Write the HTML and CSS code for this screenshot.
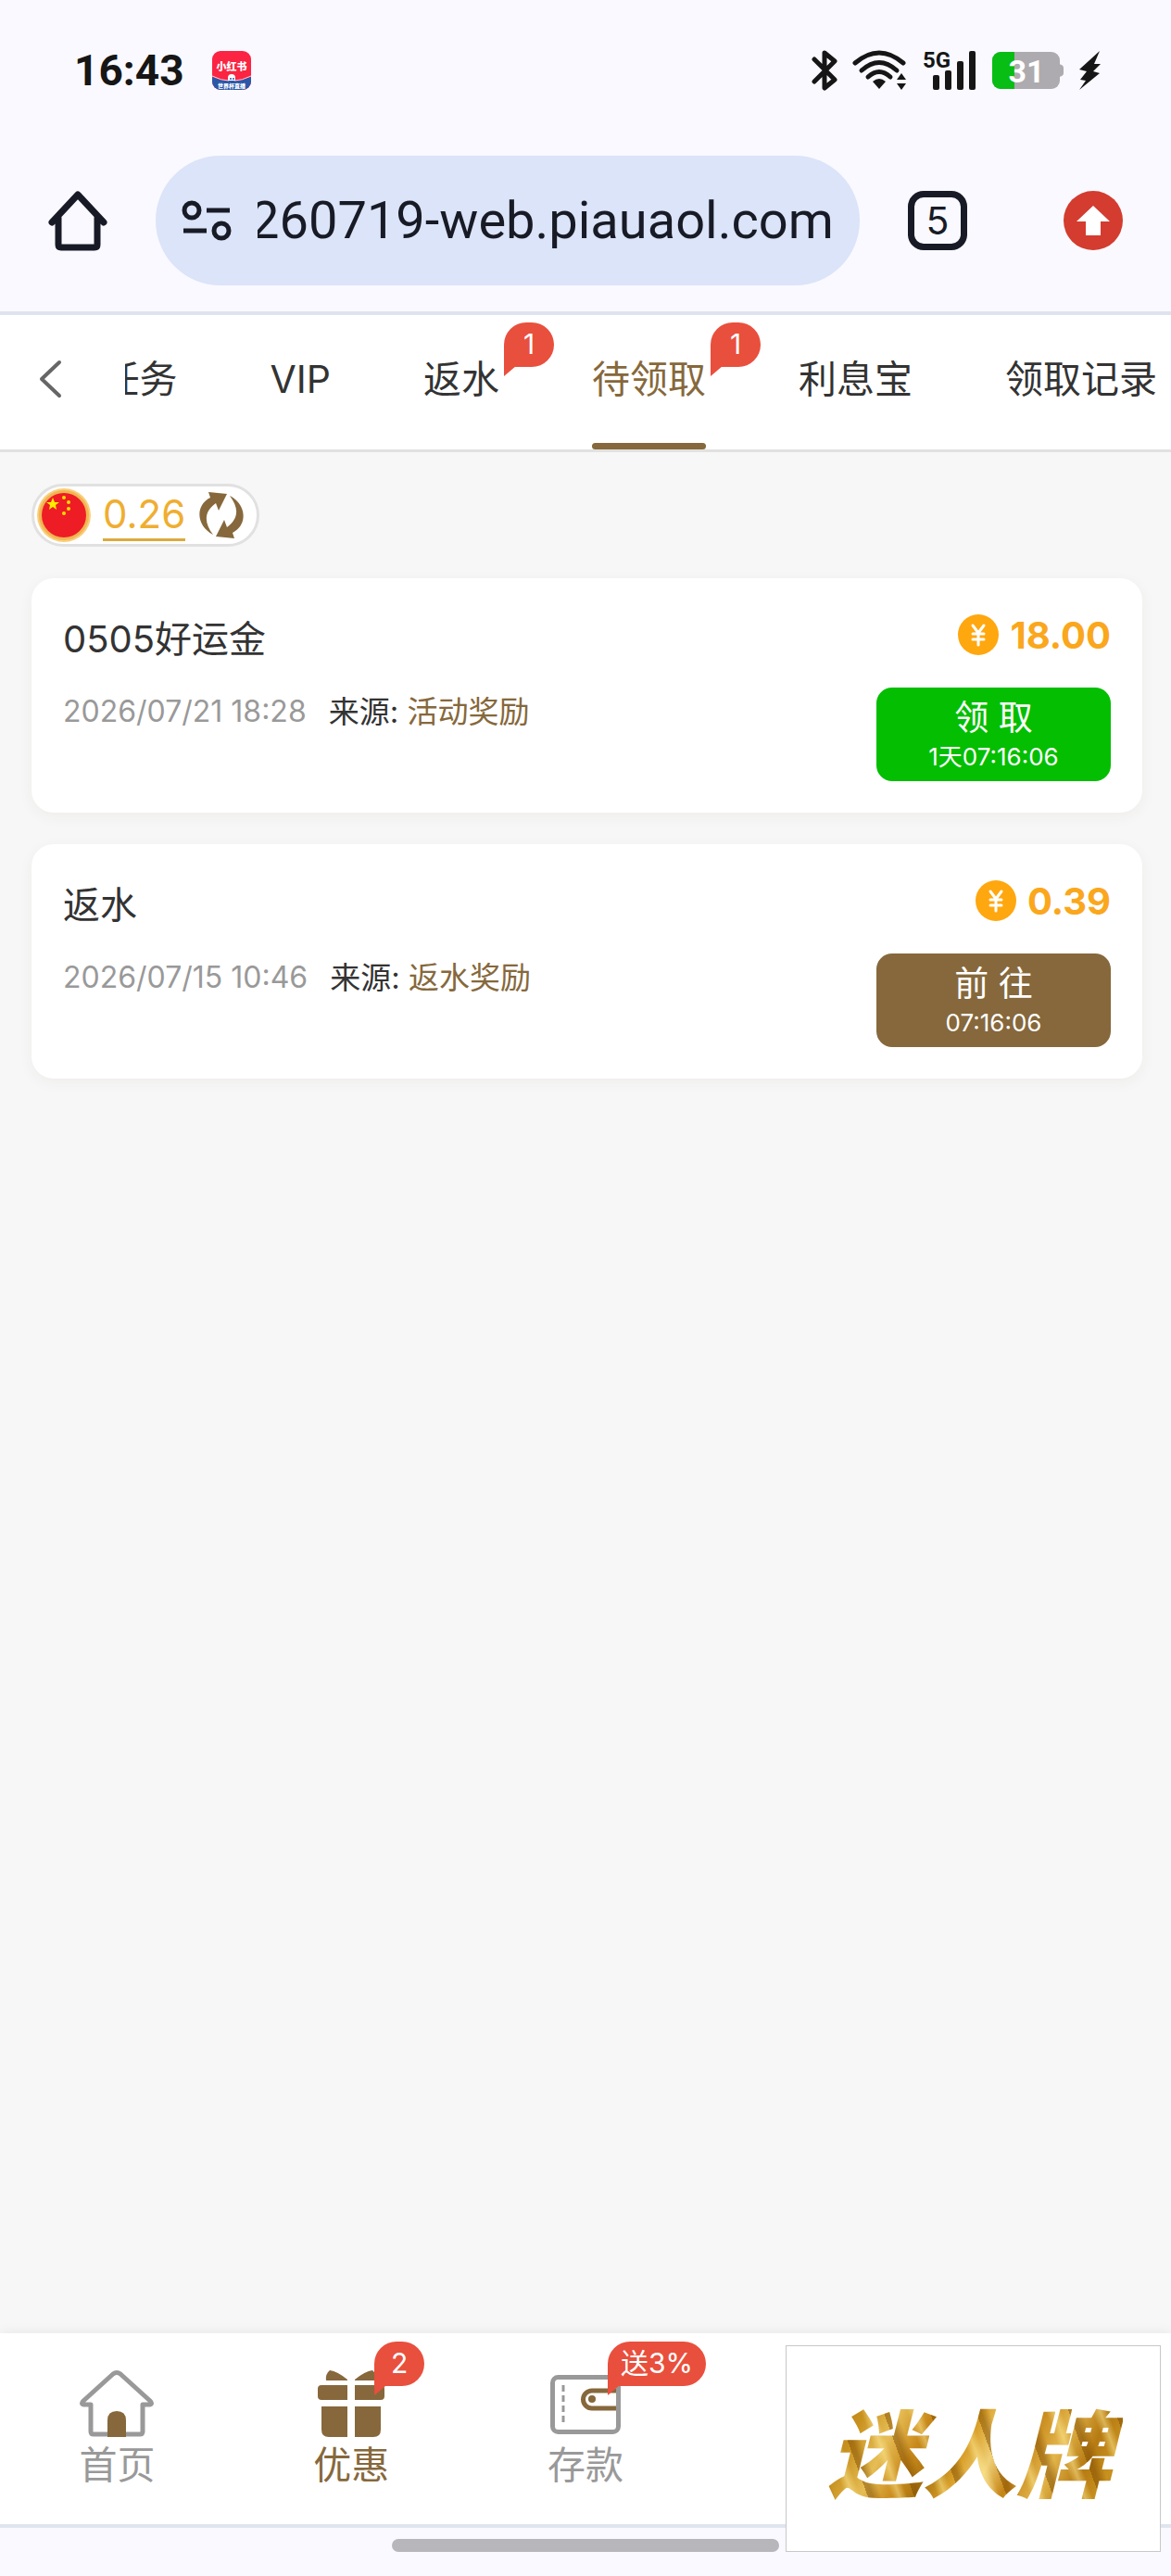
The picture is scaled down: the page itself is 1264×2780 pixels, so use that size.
FILE: index.html
```html
<!DOCTYPE html>
<html lang="zh-CN">
<head>
    <meta charset="UTF-8">
    <meta name="viewport" content="width=device-width, initial-scale=1.0">
    <title>待领取</title>
    <link rel="stylesheet" href="styles.css">
</head>
<body>

    <!-- 状态栏 -->
    <div class="status-bar">
        <div class="status-left">
            <span class="clock">16:43</span>
            <svg class="app-icon" viewBox="0 0 42 42" aria-hidden="true">
                <defs><clipPath id="appClip"><rect width="42" height="42" rx="9"/></clipPath></defs>
                <g clip-path="url(#appClip)">
                    <rect width="42" height="42" fill="#fb2442"/>
                    <path d="M0 28Q10 32 21 32Q32 32 42 28V42H0Z" fill="#2b57a8"/>
                    <path d="M0 27Q10 32 18 32M42 27Q32 32 24 32" stroke="#ffc9d2" stroke-width="1" fill="none"/>
                    <path d="M17 32V29a4 4 0 0 1 8 0v3Z" fill="#fff"/>
                    <circle cx="20" cy="30" r="1" fill="#2b57a8"/>
                    <circle cx="23" cy="30" r="1" fill="#2b57a8"/>
                    <text x="21" y="21" class="app-name">小红书</text>
                    <text x="21" y="40" class="app-note">世界杯直播</text>
                </g>
            </svg>
        </div>
        <div class="status-right">
            <svg width="28" height="44" viewBox="0 0 28 44" aria-hidden="true">
                <path d="M3 10L25 32L14 41V3L25 12L3 34" fill="none" stroke="#161616" stroke-width="5" stroke-linejoin="round" stroke-linecap="round"/>
            </svg>
            <svg class="wifi" width="60" height="44" viewBox="0 0 60 44" aria-hidden="true">
                <g fill="none" stroke="#161616" stroke-width="5" stroke-linecap="round">
                    <path d="M3 14Q29 -8 55 14"/>
                    <path d="M10 22Q29 5 48 22"/>
                    <path d="M17 29Q29 18 41 29"/>
                </g>
                <path d="M22 34Q29 28 36 34L29 42Z" fill="#161616"/>
                <path d="M48 32L53 25L58 32ZM48 36H58L53 43Z" fill="#161616"/>
            </svg>
            <svg class="signal" width="58" height="44" viewBox="0 0 58 44" aria-hidden="true">
                <text x="0" y="19" class="net-type">5G</text>
                <g fill="#161616">
                    <rect x="11" y="27" width="7" height="16" rx="2"/>
                    <rect x="24" y="22" width="7" height="21" rx="2"/>
                    <rect x="37" y="12" width="7" height="31" rx="2"/>
                    <rect x="50" y="1" width="7" height="42" rx="2"/>
                </g>
            </svg>
            <svg class="battery" width="78" height="42" viewBox="0 0 78 42" aria-hidden="true">
                <rect x="1" y="1" width="73" height="40" rx="9" fill="#adabb0"/>
                <path d="M73 14q5 1 5 4v6q0 3-5 4Z" fill="#adabb0"/>
                <path d="M10 1H25V41H10a9 9 0 0 1-9-9V10a9 9 0 0 1 9-9Z" fill="#08bd13"/>
                <text x="38" y="34" class="battery-text">31</text>
            </svg>
            <svg width="24" height="44" viewBox="0 0 24 44" aria-hidden="true">
                <path d="M23 1L1 21L9 23L2 32L8 33L1 43L23 25L16 23L24 15H17Z" fill="#161616"/>
            </svg>
        </div>
    </div>

    <!-- 浏览器地址栏 -->
    <div class="toolbar">
        <button class="icon-btn" type="button" aria-label="主页">
            <svg width="64" height="66" viewBox="0 0 64 66">
                <path d="M4 35L32 5L60 35M11 30V59q0 3 3 3H50q3 0 3-3V30" fill="none" stroke="#181b26" stroke-width="7" stroke-linejoin="round" stroke-linecap="round"/>
            </svg>
        </button>
        <div class="address">
            <svg width="54" height="46" viewBox="0 0 54 46" aria-hidden="true">
                <g fill="none" stroke="#181b26" stroke-width="5">
                    <circle cx="11" cy="12" r="8"/>
                    <circle cx="43" cy="34" r="8"/>
                    <path d="M27 12H52M2 34H27"/>
                </g>
            </svg>
            <input type="text" class="address-input" id="address" value="260719-web.piauaol.com" aria-label="网址">
        </div>
        <button class="tab-count" type="button">5</button>
        <button class="icon-btn update-btn" type="button" aria-label="更新">
            <svg width="64" height="64" viewBox="0 0 64 64">
                <circle cx="32" cy="32" r="32" fill="#d33c2f"/>
                <path d="M32 16L50 33H40V48H24V33H14Z" fill="#fff"/>
            </svg>
        </button>
    </div>

    <!-- 顶部标签 -->
    <header class="tab-bar">
        <button class="back" type="button" aria-label="返回">
            <svg width="26" height="42" viewBox="0 0 26 42">
                <path d="M23 3L4 21L23 39" fill="none" stroke="#666" stroke-width="4" stroke-linecap="round" stroke-linejoin="round"/>
            </svg>
        </button>
        <nav class="tabs">
            <a href="#" class="tab">任务</a>
            <a href="#" class="tab">VIP</a>
            <a href="#" class="tab">返水<span class="badge">1</span></a>
            <a href="#" class="tab active">待领取<span class="badge">1</span></a>
            <a href="#" class="tab">利息宝</a>
            <a href="#" class="tab">领取记录</a>
        </nav>
    </header>

    <main class="content">
        <!-- 余额 -->
        <div class="balance">
            <svg width="58" height="58" viewBox="0 0 58 58" aria-hidden="true">
                <circle cx="29" cy="29" r="29" fill="#f9cf7c"/>
                <circle cx="29" cy="29" r="27" fill="#f2b552"/>
                <circle cx="29" cy="29" r="24" fill="#ee1c25"/>
                <path d="M17 10L19 15H24L20 18L21 23L17 20L13 23L14 18L10 15H15Z" fill="#ffec00"/>
                <g fill="#ffde00">
                    <circle cx="29" cy="10" r="2"/>
                    <circle cx="34" cy="15" r="2"/>
                    <circle cx="34" cy="22" r="2"/>
                    <circle cx="29" cy="27" r="2"/>
                </g>
            </svg>
            <span class="balance-value">0.26</span>
            <button class="icon-btn" type="button" aria-label="刷新">
                <svg width="48" height="50" viewBox="0 0 48 50">
                    <g fill="#86683c">
                        <path d="M10 0L30 2L21 20L18 12C4 22 6 34 15 46C-4 36 -4 14 12 6Z"/>
                        <path d="M38 50L18 48L27 30L30 38C44 28 42 16 33 4C52 14 52 36 36 44Z"/>
                    </g>
                </svg>
            </button>
        </div>

        <!-- 奖励列表 -->
        <section class="card">
            <div class="card-info">
                <h2>0505好运金</h2>
                <p><time>2026/07/21 18:28</time><span>来源: <a href="#">活动奖励</a></span></p>
            </div>
            <div class="card-side">
                <div class="amount">
                    <svg width="44" height="44" viewBox="0 0 44 44" aria-hidden="true">
                        <circle cx="22" cy="22" r="22" fill="#ffa70f"/>
                        <path d="M16 12L22 20L28 12M22 20V33M16 21H28M16 27H28" fill="none" stroke="#fff" stroke-width="3" stroke-linecap="round" stroke-linejoin="round"/>
                    </svg>
                    <strong>18.00</strong>
                </div>
                <button class="claim" type="button">领 取<small>1天07:16:06</small></button>
            </div>
        </section>

        <section class="card">
            <div class="card-info">
                <h2>返水</h2>
                <p><time>2026/07/15 10:46</time><span>来源: <a href="#">返水奖励</a></span></p>
            </div>
            <div class="card-side">
                <div class="amount">
                    <svg width="44" height="44" viewBox="0 0 44 44" aria-hidden="true">
                        <circle cx="22" cy="22" r="22" fill="#ffa70f"/>
                        <path d="M16 12L22 20L28 12M22 20V33M16 21H28M16 27H28" fill="none" stroke="#fff" stroke-width="3" stroke-linecap="round" stroke-linejoin="round"/>
                    </svg>
                    <strong>0.39</strong>
                </div>
                <button class="claim go" type="button">前 往<small>07:16:06</small></button>
            </div>
        </section>
    </main>

    <!-- 底部导航 -->
    <nav class="bottom-nav">
        <a href="#" class="nav-item">
            <svg width="80" height="76" viewBox="0 0 80 76" aria-hidden="true">
                <path d="M12 38H4q-3-1 0-4L36 5q4-3 8 0L76 34q3 3 0 4H68V67q0 3-3 3H15q-3 0-3-3Z" fill="none" stroke="#999" stroke-width="5" stroke-linejoin="round"/>
                <path d="M30 73V55q0-10 10-10t10 10V73Z" fill="#86683c"/>
            </svg>
            首页
        </a>
        <a href="#" class="nav-item active">
            <span class="nav-icon">
                <svg width="74" height="76" viewBox="0 0 74 76" aria-hidden="true">
                    <g fill="#86683c">
                        <path d="M14 1Q22 2 33 11V12H10Q9 5 14 1ZM60 1Q52 2 41 11V12H64Q65 5 60 1Z"/>
                        <path d="M5 17H33V33H5q-4 0-4-4V21q0-4 4-4ZM41 17H69q4 0 4 4v8q0 4-4 4H41Z"/>
                        <path d="M5 40H33V73H13q-8 0-8-8ZM41 40H69V65q0 8-8 8H41Z"/>
                    </g>
                </svg>
                <span class="badge">2</span>
            </span>
            优惠
        </a>
        <a href="#" class="nav-item">
            <span class="nav-icon">
                <svg width="76" height="76" viewBox="0 0 76 76" aria-hidden="true">
                    <path d="M72 23H45a9.500 9.500 0 0 0 0 19H72" fill="none" stroke="#86683c" stroke-width="5"/>
                    <circle cx="45" cy="32" r="4" fill="#86683c"/>
                    <rect x="2.500" y="8.500" width="71" height="59" rx="6" fill="none" stroke="#999" stroke-width="5"/>
                    <path d="M14 17V60" stroke="#999" stroke-width="3" stroke-dasharray="7 4"/>
                </svg>
                <span class="badge">送3%</span>
            </span>
            存款
        </a>
    </nav>

    <!-- 手势条和浮动标志 -->
    <div class="gesture-bar">
        <div class="handle"></div>
        <a href="#" class="float-logo"><span>迷人牌</span></a>
    </div>

    <script>
        // 地址栏显示网址的末尾
        const address = document.getElementById('address');
        address.scrollLeft = address.scrollWidth;
    </script>

</body>
</html>
```

FILE: styles.css
```css
* {
    box-sizing: border-box;
}

body {
    margin: 0;
    min-height: 100vh;
    display: flex;
    flex-direction: column;
    font-family: Inter, "Noto Sans CJK SC", sans-serif;
    font-size: 41px;
    color: #333;
    background-color: #f7f7f7;
}

a {
    color: inherit;
    text-decoration: none;
}

button,
input {
    font-family: inherit;
    border: none;
    padding: 0;
    background: none;
}

svg {
    display: block;
}

/* 状态栏 */
.status-bar {
    display: flex;
    justify-content: space-between;
    align-items: center;
    height: 152px;
    padding: 0 76px 0 80px;
    background-color: #f9f9ff;
}

.status-left,
.status-right {
    display: flex;
    align-items: center;
}

.status-left {
    gap: 30px;
}

.status-right {
    gap: 16px;
}

.clock {
    font-family: Roboto, sans-serif;
    font-size: 46px;
    font-weight: 700;
    color: #161616;
}

.app-icon {
    width: 42px;
    height: 42px;
}

.app-name,
.app-note {
    font-family: "Noto Sans CJK SC", sans-serif;
    font-weight: 900;
    fill: #fff;
    text-anchor: middle;
}

.app-name {
    font-size: 11px;
}

.app-note {
    font-size: 6px;
}

.signal {
    overflow: visible;
}

.net-type {
    font-family: Roboto, sans-serif;
    font-size: 24px;
    font-weight: 700;
    fill: #161616;
}

.battery-text {
    font-family: Roboto, sans-serif;
    font-size: 34px;
    font-weight: 700;
    fill: #fff;
    text-anchor: middle;
}

/* 地址栏 */
.toolbar {
    display: flex;
    align-items: center;
    height: 188px;
    padding: 16px 52px 28px;
    border-bottom: 4px solid #dfe3f0;
    background-color: #f9f9ff;
}

.address {
    flex: 1;
    display: flex;
    align-items: center;
    gap: 28px;
    min-width: 0;
    height: 140px;
    margin: 0 52px;
    padding: 0 28px;
    border-radius: 70px;
    background-color: #dbe4f8;
}

.address-input {
    flex: 1;
    min-width: 0;
    font-family: Roboto, sans-serif;
    font-size: 56px;
    color: #181b26;
}

.tab-count {
    width: 64px;
    height: 64px;
    border: 7px solid #181b26;
    border-radius: 17px;
    font-size: 41px;
    line-height: 48px;
    color: #181b26;
}

.update-btn {
    margin-left: 104px;
}

/* 顶部标签 */
.tab-bar {
    display: flex;
    align-items: center;
    height: 148px;
    border-bottom: 3px solid #e1e1e1;
    background-color: #fff;
}

.back {
    width: 135px;
    padding: 0 0 8px 41px;
}

.tabs {
    flex: 1;
    display: flex;
    justify-content: flex-end;
    gap: 100px;
    height: 100%;
    padding-right: 15px;
    overflow: hidden;
}

.tab {
    position: relative;
    flex-shrink: 0;
    height: 145px;
    line-height: 138px;
    white-space: nowrap;
}

.tab.active {
    color: #86683c;
}

.tab.active::after {
    content: "";
    display: block;
    height: 7px;
    border-radius: 4px;
    background-color: #86683c;
}

.badge {
    position: absolute;
    top: 8px;
    left: calc(100% + 5px);
    min-width: 54px;
    height: 48px;
    padding: 0 14px;
    border-radius: 24px 24px 24px 0;
    background-color: #e94f3d;
    color: #fff;
    font-size: 30px;
    line-height: 46px;
    text-align: center;
    white-space: nowrap;
}

.badge::after {
    content: "";
    position: absolute;
    left: 0;
    top: 47px;
    width: 13px;
    height: 11px;
    background-color: #e94f3d;
    clip-path: polygon(0 0, 100% 0, 0 100%);
}

/* 内容 */
.content {
    flex: 1;
    display: flex;
    flex-direction: column;
    align-items: flex-start;
    gap: 34px;
    padding: 34px 31px 34px 34px;
}

.balance {
    display: flex;
    align-items: center;
    gap: 13px;
    height: 68px;
    padding: 0 12px 0 3px;
    border: 3px solid #e1e1e1;
    border-radius: 34px;
    background-color: #fff;
}

.balance .icon-btn {
    padding: 0 2px;
}

.balance-value {
    border-bottom: 3px solid #dcaa3c;
    color: #efae31;
    font-size: 42px;
    line-height: 52px;
}

.card {
    display: flex;
    justify-content: space-between;
    width: 100%;
    padding: 34px;
    border-radius: 24px;
    background-color: #fff;
    box-shadow: 0 4px 16px rgba(80, 60, 20, 0.05);
}

.card h2 {
    margin: 0 0 20px;
    font-size: 40px;
    font-weight: 400;
    line-height: 64px;
}

.card p {
    display: flex;
    gap: 24px;
    margin: 0;
    font-size: 33px;
    line-height: 52px;
}

.card time {
    font-size: 32px;
    color: #999;
}

.card p a {
    color: #86683c;
}

.card-side {
    display: flex;
    flex-direction: column;
    align-items: flex-end;
    gap: 30px;
}

.amount {
    display: flex;
    align-items: center;
    gap: 12px;
    height: 54px;
    color: #faa71d;
    font-size: 40px;
}

.claim {
    width: 253px;
    height: 101px;
    border-radius: 17px;
    background-color: #04be02;
    color: #fff;
    font-size: 37px;
    line-height: 48px;
}

.claim.go {
    background-color: #86683c;
}

.claim small {
    display: block;
    font-size: 26px;
    line-height: 36px;
}

/* 底部导航 */
.bottom-nav {
    display: grid;
    grid-template-columns: repeat(5, 1fr);
    height: 210px;
    padding-top: 39px;
    border-bottom: 4px solid #dfe5ef;
    background-color: #fff;
    box-shadow: 0 -2px 12px rgba(0, 0, 0, 0.06);
}

.nav-item {
    display: flex;
    flex-direction: column;
    align-items: center;
    color: #999;
    line-height: 54px;
}

.nav-item.active {
    color: #86683c;
}

.nav-icon {
    position: relative;
}

.nav-icon .badge {
    top: -30px;
    left: 62px;
}

.gesture-bar {
    position: relative;
    height: 52px;
    padding-top: 12px;
    background-color: #f9f9ff;
}

.handle {
    width: 33%;
    height: 14px;
    margin: 0 auto;
    border-radius: 7px;
    background-color: #b7b6bb;
}

.float-logo {
    position: absolute;
    right: 11px;
    bottom: 26px;
    display: flex;
    justify-content: center;
    align-items: center;
    width: 405px;
    height: 223px;
    border: 1px solid #c8c8c8;
    background-color: #fff;
}

.float-logo span {
    padding: 0 12px 0 4px;
    font-family: "Noto Sans CJK SC", sans-serif;
    font-size: 102px;
    font-style: italic;
    font-weight: 900;
    line-height: 120px;
    color: transparent;
    background:
        repeating-linear-gradient(70deg, rgba(120, 70, 0, 0.45) 0 5px, transparent 14px 24px, rgba(255, 235, 150, 0.5) 32px, transparent 40px 47px),
        linear-gradient(115deg, #a8730f 0%, #c9921f 14%, #e6bd55 24%, #c98a1b 33%, #a8730f 40%, #d9a02a 48%, #f0d078 56%, #c58416 64%, #e3b64c 74%, #b67a12 84%, #c9921f 92%, #9a6410 100%);
    -webkit-background-clip: text;
    background-clip: text;
}
```
